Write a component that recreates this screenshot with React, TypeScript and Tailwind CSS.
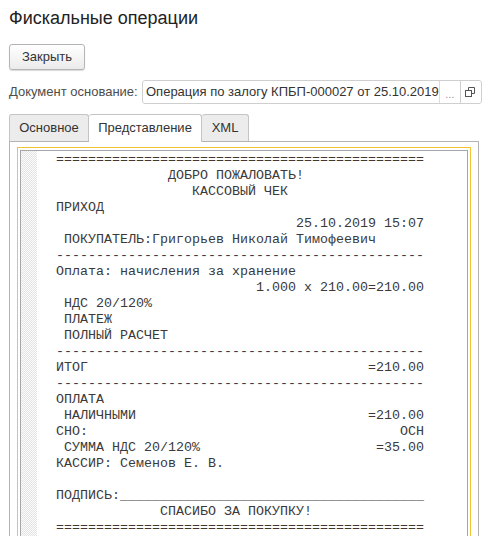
import React from "react";

const W = 46;
const sp = (n: number) => " ".repeat(n);
const lr = (l: string, r: string) => l + sp(W - l.length - r.length) + r;

const lines: string[] = [
  "=".repeat(W),
  sp(14) + "ДОБРО ПОЖАЛОВАТЬ!",
  sp(17) + "КАССОВЫЙ ЧЕК",
  "ПРИХОД",
  lr("", "25.10.2019 15:07"),
  " ПОКУПАТЕЛЬ:Григорьев Николай Тимофеевич",
  "-".repeat(W),
  "Оплата: начисления за хранение",
  lr("", "1.000 x 210.00=210.00"),
  " НДС 20/120%",
  " ПЛАТЕЖ",
  " ПОЛНЫЙ РАСЧЕТ",
  "-".repeat(W),
  lr("ИТОГ", "=210.00"),
  "-".repeat(W),
  "ОПЛАТА",
  lr(" НАЛИЧНЫМИ", "=210.00"),
  lr("СНО:", "ОСН"),
  lr(" СУММА НДС 20/120%", "=35.00"),
  "КАССИР: Семенов Е. В.",
  " ",
  "ПОДПИСЬ:" + "_".repeat(W - 8),
  sp(13) + "СПАСИБО ЗА ПОКУПКУ!",
  "=".repeat(W),
];

export default function App() {
  return (
    <div className="w-[485px] h-[545px] bg-white overflow-hidden font-['Liberation_Sans',Arial,sans-serif] text-[#333] text-[13px]">
      <div className="pl-[9px] pr-[6px]">
        <div className="pt-[7px] h-[29px] text-[18px] leading-[22px] text-[#222]">
          Фискальные операции
        </div>
        <div className="mt-[15px] flex">
          <button className="w-[76px] h-[26px] rounded-[3px] border border-[#b4b4b4] bg-gradient-to-b from-white to-[#ebebeb] shadow-[0_1px_1px_rgba(0,0,0,0.15)] text-[13px] text-[#333] flex items-center justify-center">
            Закрыть
          </button>
        </div>
        <div className="mt-[10px] h-[24px] flex items-center">
          <div className="w-[133px] shrink-0 text-[#4d4d4d]">Документ основание:</div>
          <div className="flex-1 h-[24px] flex border border-[#cfcfcf] rounded-[3px] bg-white">
            <div className="flex-1 pl-[3px] flex items-center whitespace-nowrap overflow-hidden text-[#333]">
              Операция по залогу КПБП-000027 от 25.10.2019
            </div>
            <div className="w-[21px] border-l border-[#dcdcdc] flex items-center justify-center text-[#999] text-[11px] leading-none pt-[4px]">
              ...
            </div>
            <div className="w-[21px] border-l border-[#cfcfcf] flex items-center justify-center">
              <svg width="11" height="11" viewBox="0 0 11 11" fill="none" stroke="#555" strokeWidth="1">
                <rect x="0.5" y="3.5" width="6" height="6" />
                <path d="M3.5 3.5V0.5H9.5V6.5H6.5" />
              </svg>
            </div>
          </div>
        </div>
        <div className="mt-[10px] flex h-[27px] items-end relative z-10">
          <div className="h-[27px] w-[80px] border border-[#c4c4c4] border-b-0 rounded-t-[3px] bg-[#ececec] flex items-center justify-center text-[#333]">
            Основное
          </div>
          <div className="h-[28px] mb-[-1px] w-[113px] border-t border-r border-[#c4c4c4] rounded-t-[3px] bg-white flex items-center justify-center pb-[1px] text-[#333]">
            Представление
          </div>
          <div className="h-[27px] w-[47px] border-t border-r border-[#c4c4c4] rounded-t-[3px] bg-[#ececec] flex items-center justify-center text-[#333]">
            XML
          </div>
        </div>
        <div className="h-[395px] border border-b-0 border-[#b4b4b4] pt-[5px] px-[7px]">
          <div className="h-full border border-b-0 border-[#f4c430] pt-[2px] px-[2px]">
            <div className="h-full border border-b-0 border-[#a6a6a6] flex">
              <div className="w-[16px] shrink-0 bg-[repeating-conic-gradient(#e4e4e4_0_25%,#fbfbfb_0_50%)] bg-[length:2px_2px]" />
              <pre className="pl-[19px] pt-[1px] font-['Liberation_Mono','Courier_New',monospace] text-[13.33px] leading-[16px] text-[#3a3a3a] whitespace-pre m-0">
                {lines.join("\n")}
              </pre>
            </div>
          </div>
        </div>
      </div>
    </div>
  );
}
